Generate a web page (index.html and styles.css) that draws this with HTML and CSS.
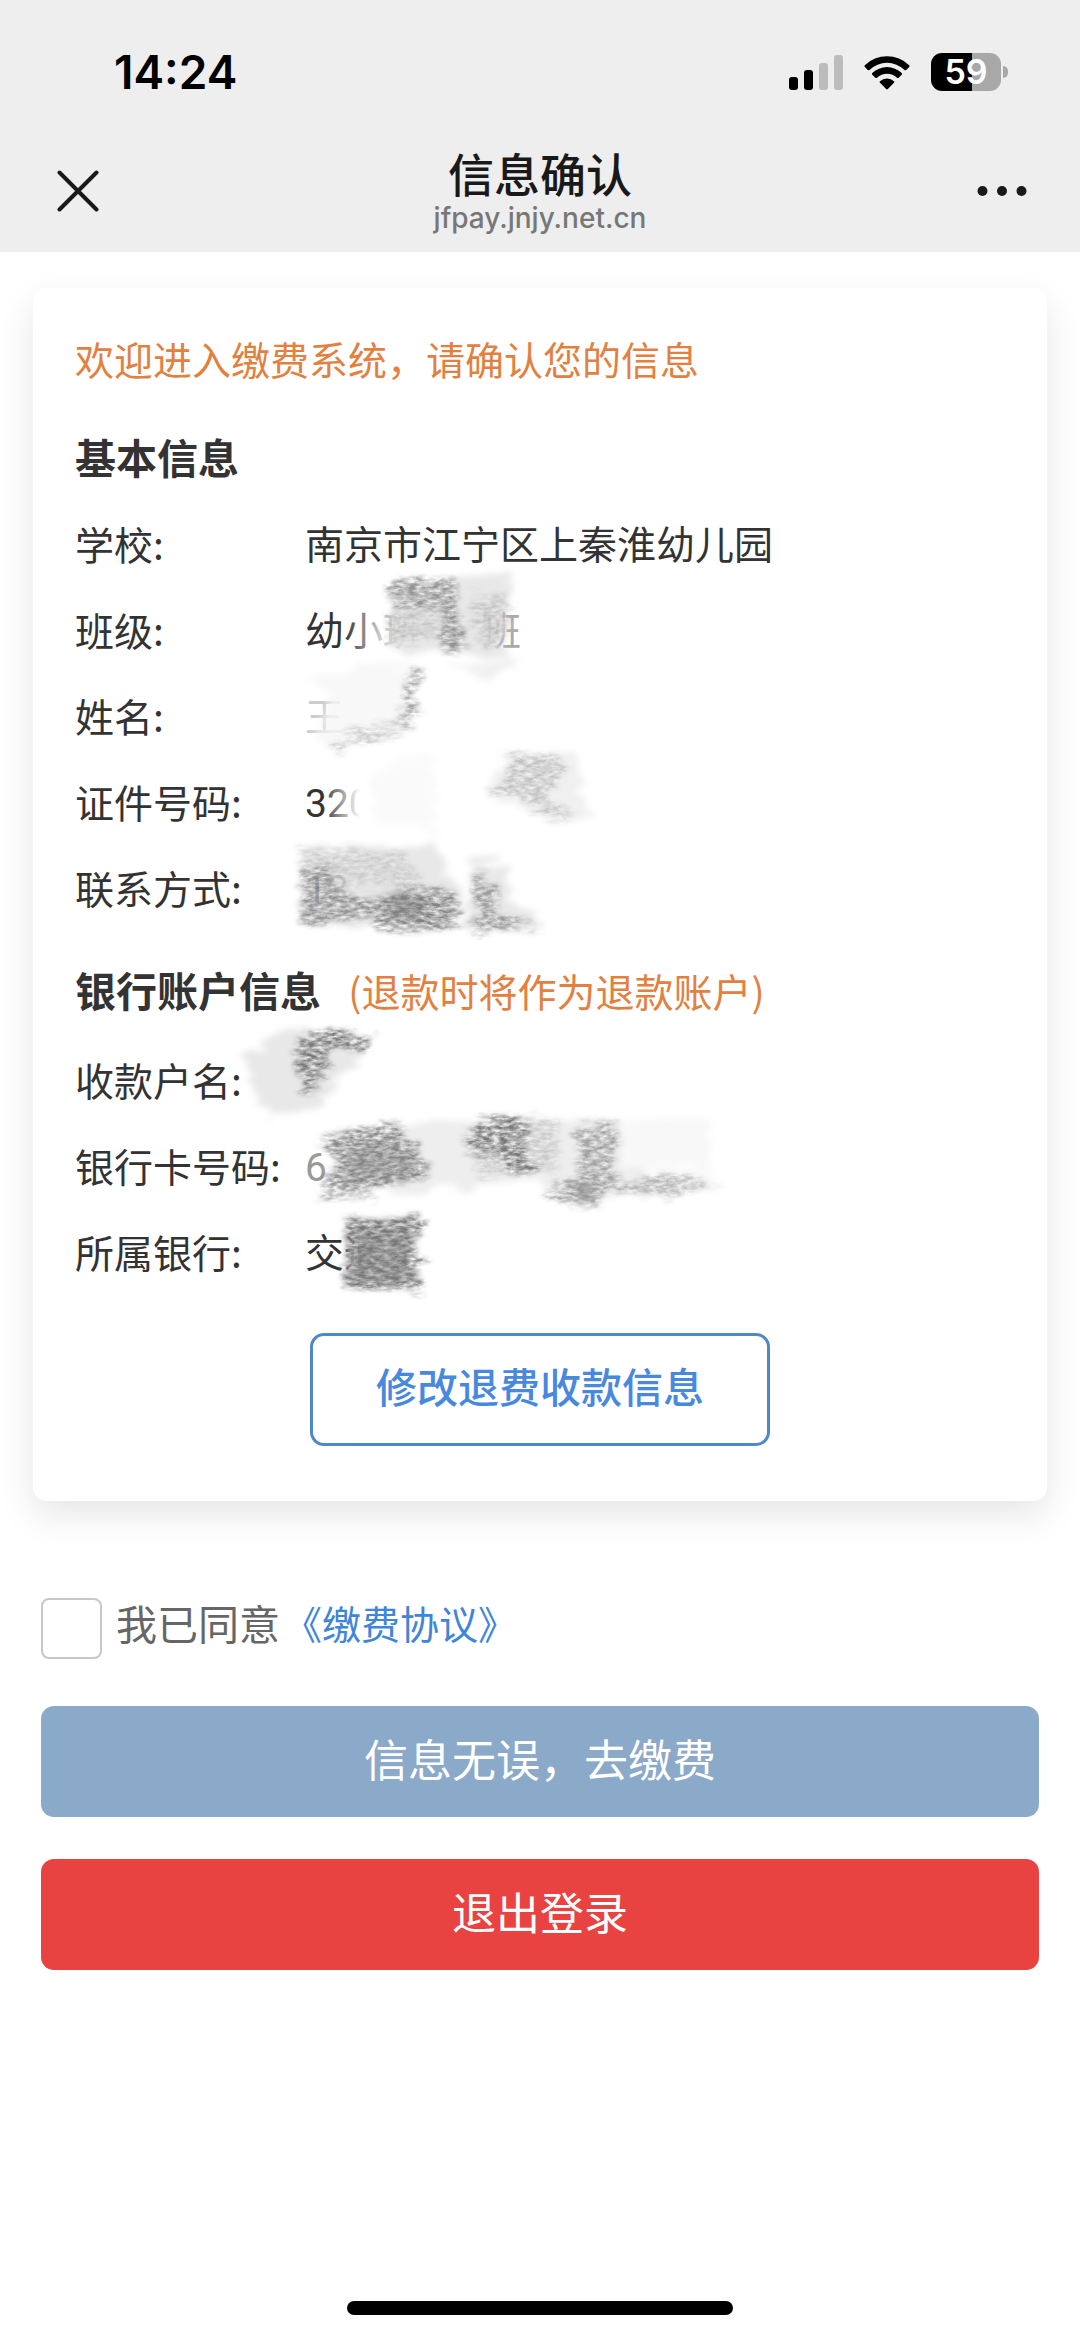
FILE: index.html
```
<!DOCTYPE html>
<html lang="zh-CN">
<head>
<meta charset="utf-8">
<meta name="viewport" content="width=device-width, initial-scale=1">
<title>信息确认</title>
<link rel="stylesheet" href="styles.css">
</head>
<body>
<header class="top">
  <div class="status">
    <time class="clock">14:24</time>
    <div class="indicators">
      <svg class="signal" width="54" height="35" viewBox="0 0 54 35" aria-hidden="true">
        <rect x="0" y="22" width="9" height="13" rx="3"/>
        <rect x="15" y="15" width="9" height="20" rx="3"/>
        <rect class="dim" x="30" y="8" width="9" height="27" rx="3"/>
        <rect class="dim" x="45" y="0" width="9" height="35" rx="3"/>
      </svg>
      <svg class="wifi" width="46" height="35" viewBox="0 0 46 35" aria-hidden="true">
        <path d="M0.8 10.2a32 32 0 0 1 44.4 0c.5.5.5 1.200 0 1.700l-3 3c-.5.5-1.200.5-1.700 0a25.200 25.200 0 0 0-35 0c-.5.5-1.200.5-1.700 0l-3-3c-.5-.5-.5-1.200 0-1.700z"/>
        <path d="M8.300 18a21.300 21.300 0 0 1 29.400 0c.5.5.5 1.200 0 1.700l-3 3c-.5.5-1.200.5-1.700 0a14.600 14.600 0 0 0-20 0c-.5.5-1.200.5-1.700 0l-3-3c-.5-.5-.5-1.200 0-1.700z"/>
        <path d="M16 26.200a10.400 10.400 0 0 1 14 0c.5.4.5 1.100 0 1.600l-6.100 6.100c-.5.5-1.300.5-1.800 0L16 27.800c-.5-.5-.5-1.200 0-1.600z"/>
      </svg>
      <div class="battery"><span class="cell">59</span><span class="nub"></span></div>
    </div>
  </div>
  <div class="nav">
    <button class="icon-btn" type="button" aria-label="关闭">
      <svg width="42" height="42" viewBox="0 0 42 42" fill="none" stroke="#191919" stroke-width="4" stroke-linecap="round"><path d="M2.500 2.500l37 37M39.500 2.500l-37 37"/></svg>
    </button>
    <div class="titles">
      <h1 class="title">信息确认</h1>
      <p class="host">jfpay.jnjy.net.cn</p>
    </div>
    <button class="icon-btn" type="button" aria-label="更多">
      <svg width="50" height="12" viewBox="0 0 50 12" fill="#191919"><circle cx="5.500" cy="6" r="5"/><circle cx="25" cy="6" r="5"/><circle cx="44.500" cy="6" r="5"/></svg>
    </button>
  </div>
</header>

<main class="page">
  <section class="card">
    <p class="welcome">欢迎进入缴费系统，请确认您的信息</p>
    <h2 class="heading">基本信息</h2>
    <dl class="info">
      <dt>学校:</dt><dd>南京市江宁区上秦淮幼儿园</dd>
      <dt>班级:</dt><dd class="split"><span>幼小班</span><span class="tail">班</span></dd>
      <dt>姓名:</dt><dd class="faint">王</dd>
      <dt>证件号码:</dt><dd>320</dd>
      <dt>联系方式:</dt><dd>13</dd>
    </dl>
    <h2 class="heading bank">银行账户信息 <span class="note">(退款时将作为退款账户)</span></h2>
    <dl class="info">
      <dt>收款户名:</dt><dd></dd>
      <dt>银行卡号码:</dt><dd class="soft">6</dd>
      <dt>所属银行:</dt><dd>交通</dd>
    </dl>
    <button class="edit" type="button">修改退费收款信息</button>

    <svg class="scribbles" width="1014" height="1212" viewBox="33 288 1014 1212" aria-hidden="true">
      <defs>
        <filter id="pencil" x="-10%" y="-20%" width="120%" height="140%" color-interpolation-filters="sRGB">
          <feTurbulence type="fractalNoise" baseFrequency=".02 .2" numOctaves="3" seed="4" result="streak"/>
          <feDisplacementMap in="SourceGraphic" in2="streak" scale="30" xChannelSelector="R" yChannelSelector="B" result="shape"/>
          <feGaussianBlur in="shape" stdDeviation="2" result="soft"/>
          <feTurbulence type="fractalNoise" baseFrequency=".12 .3" numOctaves="4" seed="9" result="grain"/>
          <feColorMatrix in="grain" values="0 0 0 0 0  0 0 0 0 0  0 0 0 0 0  1.900 0 0 0 -.4" result="mask"/>
          <feComposite in="soft" in2="mask" operator="in" result="drawn"/>
          <feGaussianBlur in="drawn" stdDeviation=".6"/>
        </filter>
        <filter id="smear" x="-20%" y="-20%" width="140%" height="140%" color-interpolation-filters="sRGB">
          <feTurbulence type="fractalNoise" baseFrequency=".02 .1" numOctaves="3" seed="2" result="n"/>
          <feDisplacementMap in="SourceGraphic" in2="n" scale="28" xChannelSelector="R" yChannelSelector="B" result="d"/>
          <feGaussianBlur in="d" stdDeviation="3"/>
        </filter>
        <linearGradient id="fade"><stop offset="0" stop-color="#fff" stop-opacity="0"/><stop offset="1" stop-color="#fff"/></linearGradient>
        <linearGradient id="veil"><stop offset="0" stop-color="#fff" stop-opacity="0"/><stop offset=".45" stop-color="#fff" stop-opacity=".75"/><stop offset="1" stop-color="#fff" stop-opacity=".85"/></linearGradient>
      </defs>

      <rect x="344" y="606" width="80" height="52" fill="url(#veil)"/>
      <rect x="322" y="780" width="38" height="46" fill="url(#fade)"/>
      <rect x="360" y="780" width="16" height="46" fill="#fff"/>
      <rect x="320" y="866" width="40" height="46" fill="url(#fade)"/>
      <rect x="345" y="1230" width="48" height="46" fill="url(#fade)"/>

      <g filter="url(#smear)">
        <path fill="#e2e2e2" fill-opacity=".8" d="M390 584L514 576L504 642L500 655L440 654L392 650z"/>
        <path fill="#f1f1f1" d="M446 664L530 660L490 678z"/>
        <path fill="#f6f6f6" fill-opacity=".8" d="M305 674L412 668L412 730L345 748L318 742L332 700z"/>
        <path fill="#f0f0f0" d="M508 755L575 755L590 815L560 820L485 795z"/>
        <path fill="#fafafa" d="M370 770L430 750L436 830L372 825z"/>
        <path fill="#dedede" fill-opacity=".7" d="M304 848L438 848L462 900L455 930L345 925L300 920z"/>
        <path fill="#e9e9e9" d="M470 862L508 860L510 900L545 928L470 934z"/>
        <path fill="#e8e8e8" d="M245 1052L315 1022L300 1040L370 1034L350 1070L315 1108L272 1116L248 1082z"/>
        <path fill="#eeeeee" d="M332 1134L450 1122L600 1118L640 1122L640 1170L720 1186L580 1205L540 1180L420 1190L330 1196z"/>
        <path fill="#f8f8f8" d="M620 1120L710 1120L710 1172L620 1168z"/>
        <path fill="#c8c8c8" fill-opacity=".8" d="M352 1218L416 1218L416 1286L344 1286z"/>
      </g>

      <g filter="url(#pencil)" fill="#777">
        <path opacity=".75" d="M388 584L402 578L457 578L460 625L466 640L460 652L440 654L442 610L390 606z"/>
        <path opacity=".3" d="M470 600L510 590L505 640L480 650zM385 612L440 612L440 640L390 646z"/>
        <path opacity=".7" d="M408 668L420 670L414 700L412 728L400 724L404 696z"/>
        <path opacity=".4" d="M345 728L410 722L396 738L350 742zM330 746L352 740L348 750L334 752z"/>
        <path opacity=".4" d="M508 754L566 754L560 775L545 798L575 814L560 822L520 800L484 796L510 776z"/>
        <path opacity=".75" d="M300 868L326 866L340 890L375 900L375 920L297 924L304 900z"/>
        <path opacity=".25" d="M300 846L400 850L430 885L340 888L300 862z"/>
        <path opacity=".9" d="M375 898L410 890L458 892L454 928L376 932z"/>
        <path opacity=".7" d="M472 876L500 886L494 912L540 926L468 936L474 910z"/>
        <path d="M298 1038L376 1030L370 1049L326 1052L328 1064L312 1098L304 1098L304 1076L294 1074L298 1054z"/>
        <path opacity=".85" d="M324 1130L404 1127L428 1168L424 1182L326 1192L334 1164z"/>
        <path opacity=".4" d="M324 1188L380 1186L370 1200L322 1202z"/>
        <path d="M480 1116L520 1116L530 1150L536 1174L512 1176L496 1152L470 1150z"/>
        <path opacity=".3" d="M520 1120L560 1120L555 1170L480 1176L460 1130z"/>
        <path opacity=".65" d="M576 1126L614 1122L616 1180L596 1206L566 1208L540 1192L576 1178z"/>
        <path opacity=".5" d="M616 1178L680 1178L728 1186L646 1194L612 1190z"/>
        <path d="M346 1214L422 1216L416 1244L424 1268L418 1290L338 1288L348 1266z"/>
      </g>
      <g filter="url(#smear)" fill="#777">
        <path opacity=".5" d="M390 898L424 896L418 914L392 918z"/>
        <path opacity=".3" d="M345 1150L410 1150L412 1182L348 1182z"/>
        <path opacity=".5" d="M574 1182L592 1180L588 1198L576 1202z"/>
        <path opacity=".25" d="M352 1230L410 1230L410 1282L352 1282z"/>
      </g>
    </svg>
  </section>

  <form class="actions">
    <div class="agree">
      <input class="tick" type="checkbox" id="agree">
      <label for="agree">我已同意</label>
      <a class="terms" href="#terms">《缴费协议》</a>
    </div>
    <button class="btn pay" type="button">信息无误，去缴费</button>
    <button class="btn logout" type="button">退出登录</button>
  </form>
</main>
<div class="home"></div>
</body>
</html>
```

FILE: styles.css
```
* {
  box-sizing: border-box;
  margin: 0;
  padding: 0;
}

body {
  min-height: 100vh;
  display: flex;
  flex-direction: column;
  background: #fff;
  color: #333;
  font-family: "Noto Sans CJK SC", sans-serif;
  font-size: 39px;
}

button {
  font: inherit;
  cursor: pointer;
}

svg {
  display: block;
}

.top {
  background: #eee;
  height: 252px;
}

.status {
  display: flex;
  justify-content: space-between;
  align-items: center;
  height: 144px;
  padding: 0 72px 0 114px;
}

.clock {
  color: #000;
  font: 600 46px/1 Inter, sans-serif;
}

.indicators {
  display: flex;
  align-items: center;
  gap: 21px;
}

.dim {
  fill: #bcbcbc;
}

.battery {
  display: flex;
  align-items: center;
  gap: 2px;
}

.cell {
  width: 70px;
  border-radius: 11px;
  background: linear-gradient(90deg, #000 59%, #a8a8a8 59%);
  color: #fff;
  font: 600 34px/38px Inter, sans-serif;
  text-align: center;
}

.nub {
  width: 5px;
  height: 12px;
  border-radius: 0 6px 6px 0;
  background: #a8a8a8;
}

.nav {
  display: flex;
  justify-content: space-between;
  align-items: center;
  height: 94px;
  padding: 0 50px;
}

.icon-btn {
  display: grid;
  place-items: center;
  min-width: 56px;
  height: 60px;
  border: 0;
  background: none;
}

.titles {
  text-align: center;
}

.title {
  margin-bottom: 6px;
  color: #191919;
  font-size: 46px;
  font-weight: 500;
  line-height: 48px;
}

.host {
  color: #777;
  font: 500 28px/32px Inter, sans-serif;
}

.page {
  flex: 1;
}

.card {
  position: relative;
  margin: 36px 33px 0;
  padding: 42px 42px 55px;
  border-radius: 14px;
  box-shadow: 0 14px 36px rgba(0, 0, 0, .1);
}

.welcome {
  color: #e2813f;
  line-height: 56px;
}

.heading {
  padding-top: 41px;
  font-size: 41px;
  font-weight: 700;
  line-height: 58px;
}

.bank {
  padding: 28px 0 19px;
}

.note {
  margin-left: 18px;
  color: #e2813f;
  font-size: 39px;
  font-weight: 400;
}

.info {
  display: grid;
  grid-template-columns: 230px 1fr;
  grid-auto-rows: 86px;
  line-height: 82px;
}

.heading + .info {
  margin-top: 17px;
}

.bank + .info {
  margin-top: 0;
}

.info dd {
  font-family: Roboto, "Noto Sans CJK SC", sans-serif;
  line-height: 88px;
}

.split {
  display: flex;
  gap: 60px;
}

.tail {
  color: #aaa;
}

.info .faint {
  color: #ccc;
}

.info .soft {
  color: #999;
}

.edit {
  display: block;
  width: 460px;
  height: 113px;
  margin: 37px auto 0;
  padding-bottom: 10px;
  border: 3px solid #4f88c6;
  border-radius: 14px;
  background: #fff;
  color: #4888de;
  font-size: 41px;
  font-weight: 500;
}

.scribbles {
  position: absolute;
  top: 0;
  left: 0;
  pointer-events: none;
}

.actions {
  display: flex;
  flex-direction: column;
  gap: 42px;
  padding: 97px 41px;
}

.agree {
  display: flex;
  height: 61px;
  margin-bottom: 5px;
  color: #666;
  font-size: 41px;
  line-height: 48px;
}

.tick {
  appearance: none;
  width: 61px;
  height: 61px;
  margin-right: 14px;
  border: 2px solid #c8c8c8;
  border-radius: 8px;
  background: #fff;
}

.terms {
  margin-left: 3px;
  color: #3f86d8;
  font-size: 39px;
  text-decoration: none;
}

.btn {
  height: 111px;
  padding-bottom: 8px;
  border: 0;
  border-radius: 13px;
  color: #fff;
  font-size: 44px;
}

.pay {
  background: #8ba9c8;
}

.logout {
  background: #e84341;
}

.home {
  width: 386px;
  height: 14px;
  margin: 0 auto 22px;
  border-radius: 7px;
  background: #000;
}
```
